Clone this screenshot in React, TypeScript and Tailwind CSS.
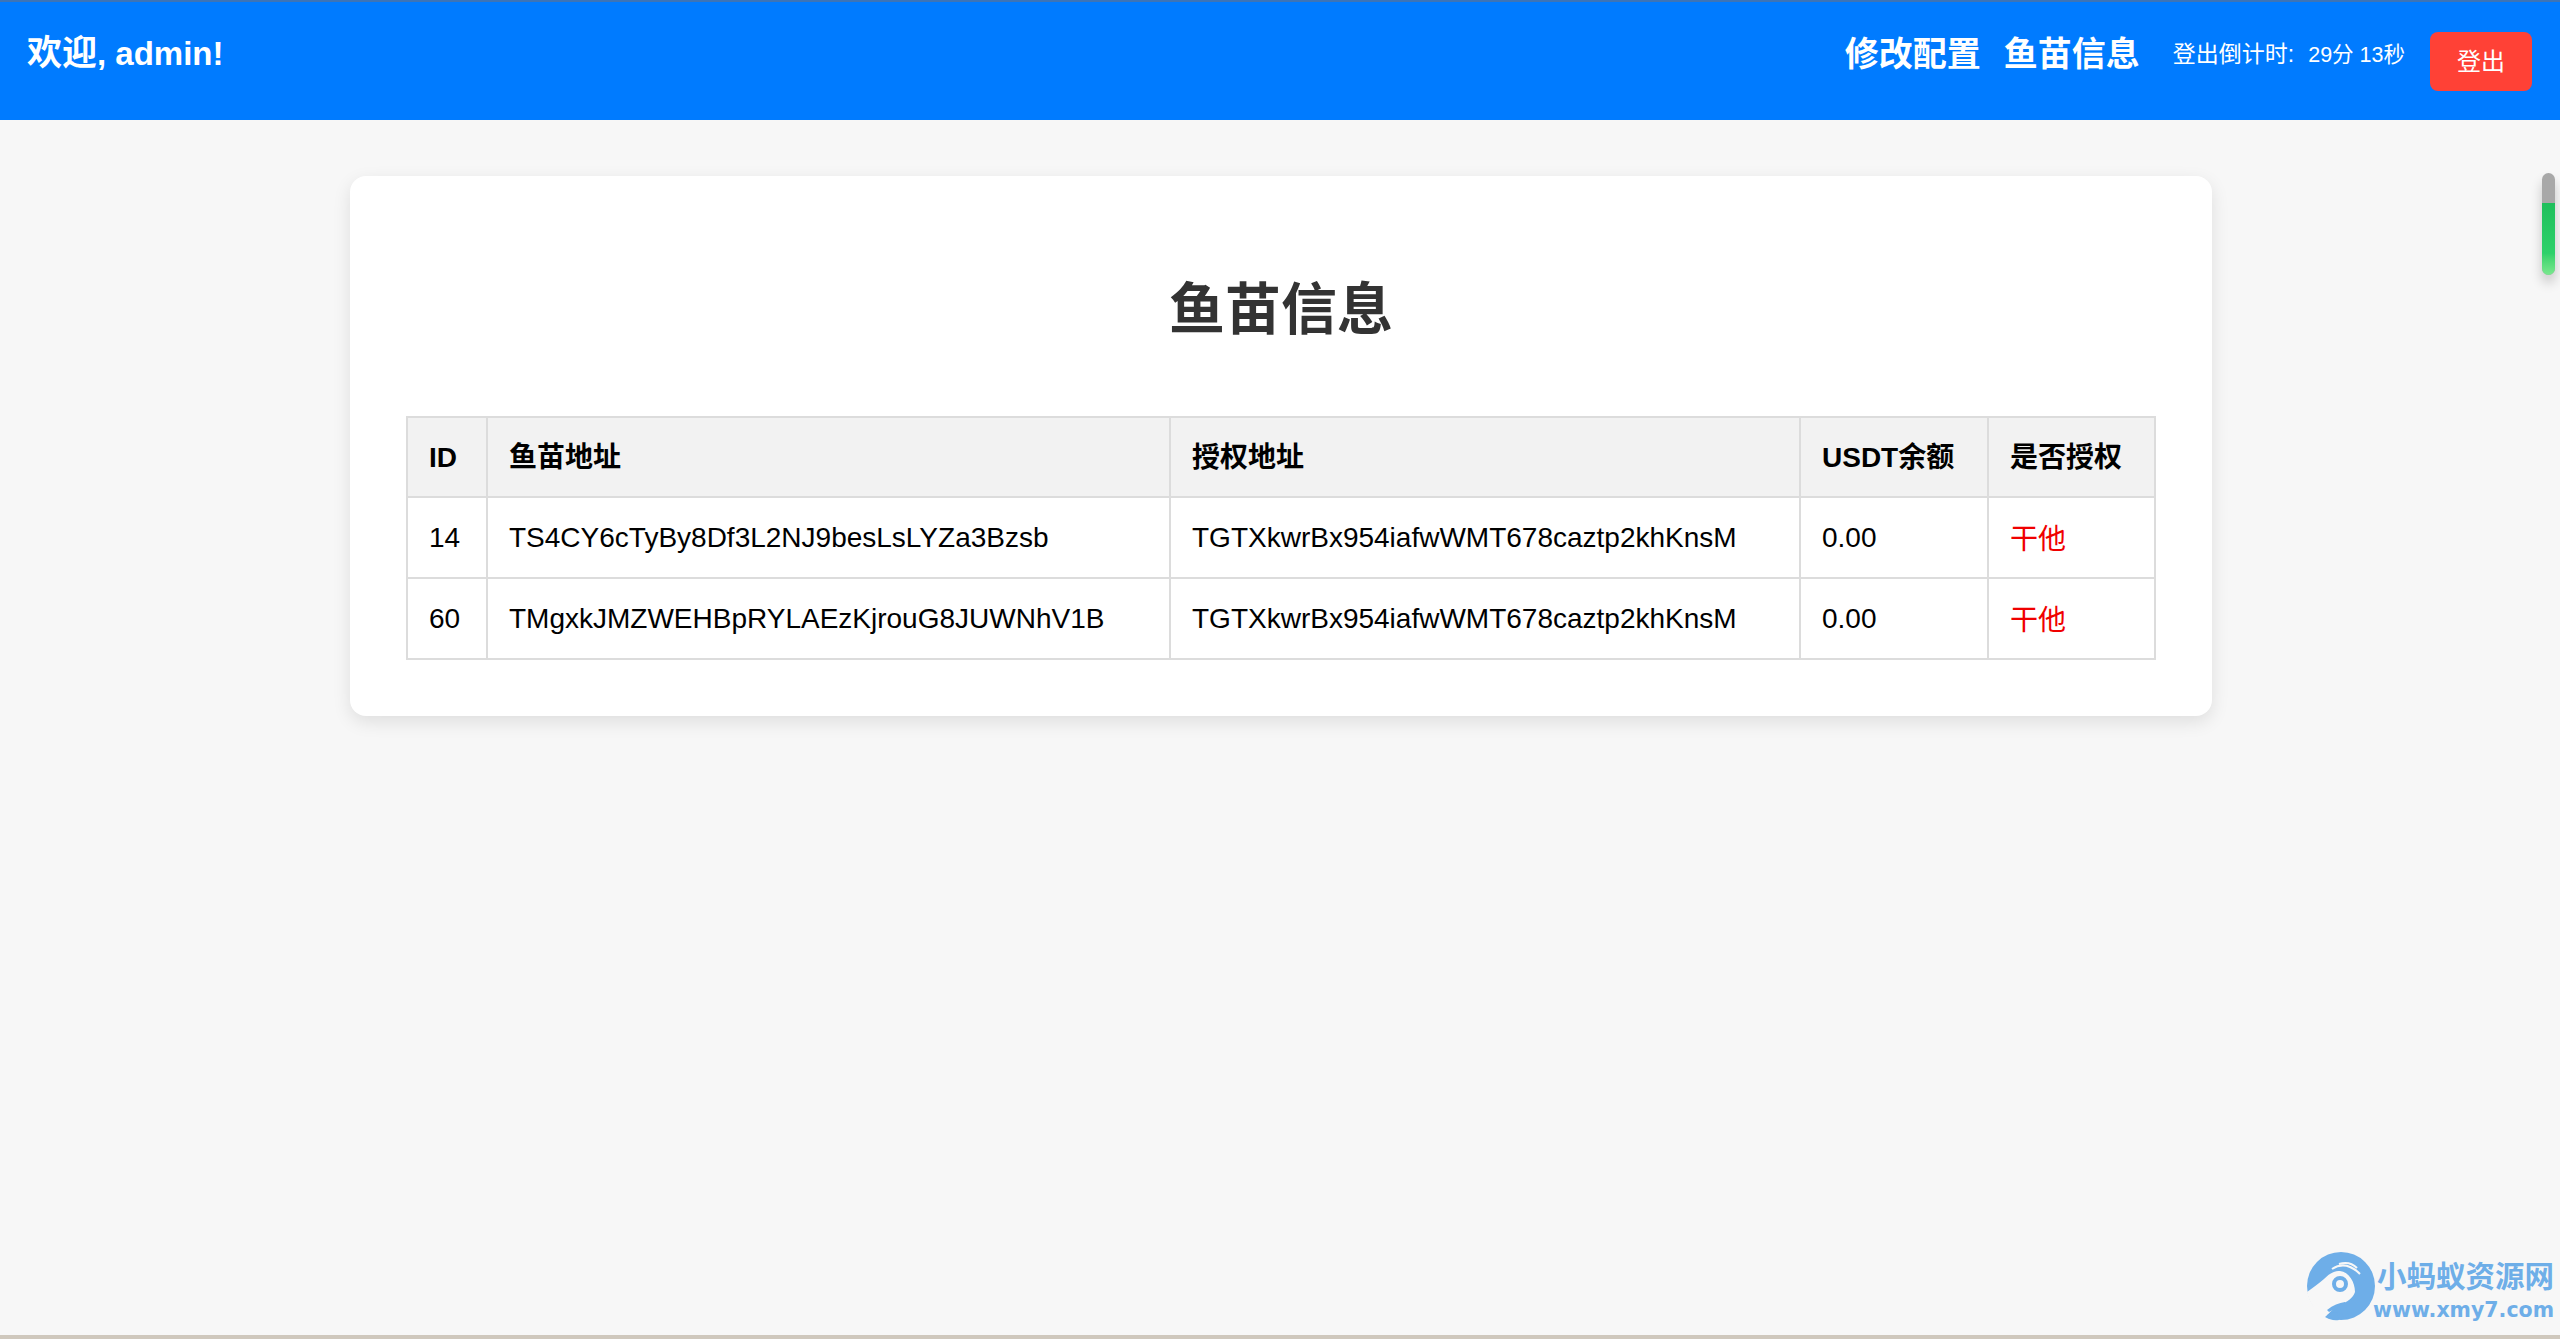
import React from "react";

const rows = [
  { id: "14", fish: "TS4CY6cTyBy8Df3L2NJ9besLsLYZa3Bzsb", auth: "TGTXkwrBx954iafwWMT678caztp2khKnsM", usdt: "0.00", status: "干他" },
  { id: "60", fish: "TMgxkJMZWEHBpRYLAEzKjrouG8JUWNhV1B", auth: "TGTXkwrBx954iafwWMT678caztp2khKnsM", usdt: "0.00", status: "干他" },
];

const th = "border-2 border-[#dcdcdc] bg-[#f2f2f2] px-[21px] pt-[2px] text-left text-[28px] font-bold text-black";
const td = "border-2 border-[#dcdcdc] px-[21px] text-left text-[28px] font-normal text-black";

function Logo() {
  return (
    <svg width="76" height="76" viewBox="0 0 76 76" className="shrink-0">
      <circle cx="38" cy="38" r="34" fill="#6eaee8" />
      <path d="M4 44 C10 40 16 35 21 31 C28 24 32 23 37 23 C46 24 52 34 52 44 C50 50 44 54 37 57 C30 60 25 66 22 70 C12 64 6 54 4 44 Z" fill="#f7f7f7" />
      <circle cx="37" cy="36" r="6" fill="none" stroke="#6eaee8" strokeWidth="4" />
      <path d="M29 21 C38 15 48 17 57 26" fill="none" stroke="#f7f7f7" strokeWidth="2" />
      <path d="M36 16 C42 14 49 15 54 20" fill="none" stroke="#f7f7f7" strokeWidth="2" />
      <path d="M24 62 C30 57 36 55 42 54 L46 69 L41 71 L37 60 C33 61 29 62 26 64 Z" fill="#6eaee8" />
      <path d="M22 69 C26 65 30 64 34 64 L36 72 C30 73 26 71 22 69 Z" fill="#6eaee8" />
    </svg>
  );
}

export default function App() {
  return (
    <div className="relative flex h-[1339px] flex-col overflow-hidden bg-[#f7f7f7] font-['Liberation_Sans','Noto_Sans_CJK_SC',sans-serif]">
      <header className="box-border flex h-[120px] shrink-0 items-center justify-between border-t-2 border-[#3d74b6] bg-[#007bff] pl-[27px] pr-[28px] text-white">
        <h3 className="pb-[16px] text-[35px] font-bold">
          欢迎<span className="text-[33px]">, admin!</span>
        </h3>
        <div className="flex items-center">
          <nav className="flex gap-[23px] pb-[14px] text-[34px] font-bold">
            <span>修改配置</span>
            <span>鱼苗信息</span>
          </nav>
          <span className="ml-[33px] flex items-baseline pb-[14px] text-[23px]">
            <span>登出倒计时:</span>
            <span className="ml-[14px] text-[21.5px]">29分 13秒</span>
          </span>
          <button className="ml-[25px] h-[59px] w-[102px] rounded-[8px] bg-[#ff4136] pt-[2px] text-[24px] text-white">登出</button>
        </div>
      </header>

      <main className="flex flex-1 items-start justify-center pl-[2px] pt-[56px]">
        <section className="box-border w-[1862px] rounded-[16px] bg-white px-[56px] py-[56px] shadow-[0_6px_18px_rgba(0,0,0,0.1)]">
          <h1 className="mb-[29px] text-center text-[56px] font-bold leading-[155px] text-[#333]">鱼苗信息</h1>
          <table className="w-[1748px] table-fixed border-collapse">
            <colgroup>
              <col className="w-[80px]" />
              <col className="w-[683px]" />
              <col className="w-[630px]" />
              <col className="w-[188px]" />
              <col className="w-[167px]" />
            </colgroup>
            <thead>
              <tr className="h-[80px]">
                <th className={th}>ID</th>
                <th className={th}>鱼苗地址</th>
                <th className={th}>授权地址</th>
                <th className={th}>USDT余额</th>
                <th className={th}>是否授权</th>
              </tr>
            </thead>
            <tbody>
              {rows.map((r) => (
                <tr key={r.id} className="h-[81px]">
                  <td className={td}>{r.id}</td>
                  <td className={td}>{r.fish}</td>
                  <td className={td}>{r.auth}</td>
                  <td className={td}>{r.usdt}</td>
                  <td className={`${td} pt-[5px] !text-[#f00000]`}>{r.status}</td>
                </tr>
              ))}
            </tbody>
          </table>
        </section>
      </main>

      <div className="h-[4px] shrink-0 bg-[#cfc8bd]" />

      {/* floating scroll widget */}
      <div className="absolute right-[5px] top-[173px] h-[102px] w-[13px] overflow-hidden rounded-full bg-[#a8a8a8] shadow-[0_8px_12px_rgba(0,0,0,0.2)]">
        <div className="mt-[30px] h-[72px] bg-gradient-to-b from-[#1fbf5c] via-[#2ed16a] via-70% to-[#7ae88f]" />
      </div>

      {/* watermark */}
      <div className="absolute bottom-[15px] right-[6px] flex items-start">
        <Logo />
        <div className="-ml-[6px] flex flex-col items-end pt-[11px] font-['DejaVu_Sans','Noto_Sans_CJK_SC',sans-serif] font-bold text-[#6eaee8]">
          <span className="text-[29.5px] leading-[37px]">小蚂蚁资源网</span>
          <span className="text-[20.5px] leading-[28px]">www.xmy7.com</span>
        </div>
      </div>
    </div>
  );
}
